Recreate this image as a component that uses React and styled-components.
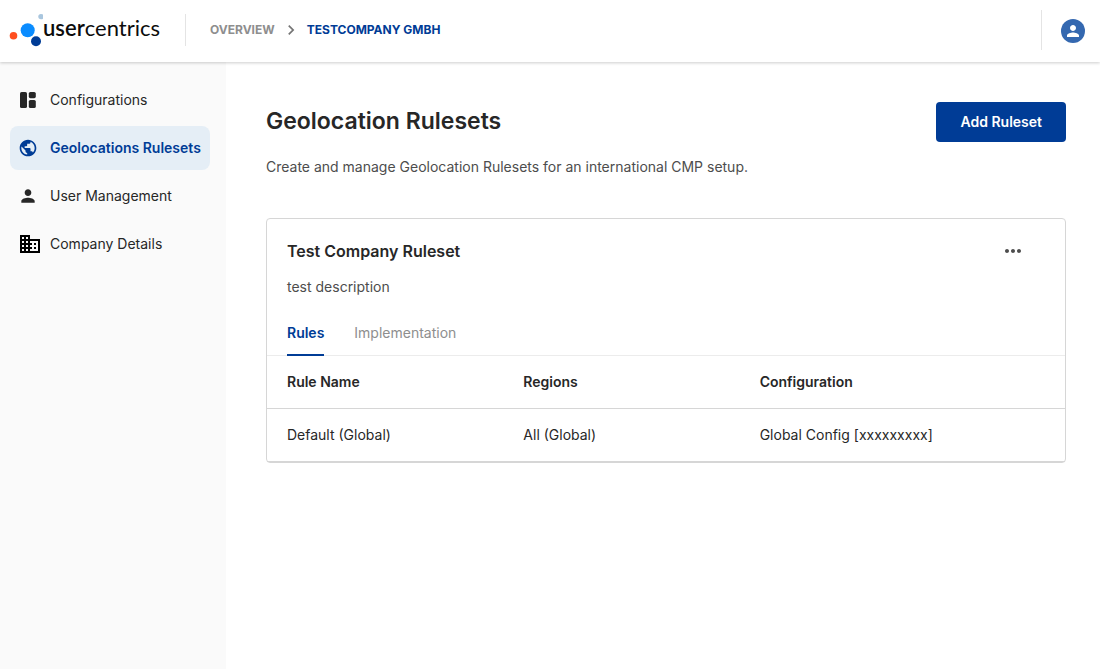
import React from "react";
import styled, { createGlobalStyle } from "styled-components";
import { MdBusiness, MdChevronRight, MdMoreHoriz, MdPerson, MdPublic } from "react-icons/md";

const color = {
  blue: "#003c96",
  avatar: "#3468b0",
  ink: "#272727",
  text: "#4d4d4d",
  muted: "#8e8e8e",
  line: "#d6d6d6",
  lineLight: "#ececec",
};

const GlobalStyle = createGlobalStyle`
  *, *::before, *::after { box-sizing: border-box; }
  body {
    margin: 0;
    background: #fff;
    color: ${color.ink};
    font: 400 14px/20px Inter, "Liberation Sans", sans-serif;
  }
  h1, h2, p, ul, ol { margin: 0; padding: 0; }
  ul, ol { list-style: none; }
  a { color: inherit; text-decoration: none; }
  button { border: 0; background: none; padding: 0; font: inherit; color: inherit; cursor: pointer; }
`;

const Page = styled.div`
  min-height: 100vh;
  display: flex;
  flex-direction: column;
`;

const TopBar = styled.header`
  position: relative;
  display: flex;
  align-items: center;
  height: 62px;
  padding: 0 15px 2px 8px;
  background: #fff;
  box-shadow: 0 1px 3px rgba(0, 0, 0, 0.2);
`;

const Brand = styled.a`
  display: flex;
  align-items: center;
  width: 178px;
  height: 32px;
  border-right: 1px solid #e4e4e4;
`;

const BrandMark = styled.svg`
  flex: none;
  width: 35px;
  height: 36px;
`;

const BrandName = styled.span`
  color: #0c0c0c;
  font: 400 22px/28px Lato, sans-serif;
  padding-bottom: 4px;
`;

const BrandStrong = styled.span`
  font-weight: 600;
`;

const Crumbs = styled.ol`
  display: flex;
  align-items: center;
  flex: 1;
  padding-left: 24px;
  font-size: 12px;
  font-weight: 700;
  line-height: 16px;
`;

const Crumb = styled.li`
  display: flex;
  align-items: center;
  color: ${(p) => (p.$current ? color.blue : color.muted)};

  svg { margin: 0 6px; color: #757575; }
`;

const Account = styled.div`
  display: flex;
  align-items: center;
  height: 40px;
  padding: 2px 0 0 19px;
  border-left: 1px solid #e4e4e4;
`;

const Avatar = styled.button`
  display: grid;
  place-items: center;
  width: 24px;
  height: 24px;
  border-radius: 50%;
  background: ${color.avatar};
  color: #fff;
`;

const Body = styled.div`
  display: flex;
  flex: 1;
`;

const Sidebar = styled.nav`
  flex: none;
  width: 226px;
  padding: 16px 16px 16px 10px;
  background: #fafafa;
`;

const NavList = styled.ul`
  display: grid;
  gap: 4px;
`;

const NavLink = styled.a`
  display: flex;
  align-items: center;
  gap: 8px;
  height: 44px;
  padding-left: 8px;
  border-radius: 8px;
  white-space: nowrap;
  background: ${(p) => (p.$active ? "#e5eef6" : "transparent")};
  color: ${(p) => (p.$active ? color.blue : color.ink)};
  font-weight: ${(p) => (p.$active ? 600 : 400)};
`;

const NavIcon = styled.span`
  display: flex;
  width: 24px;
`;

const Main = styled.main`
  flex: 1;
  min-width: 0;
  padding: 40px 34px 40px 40px;
`;

const PageHead = styled.div`
  display: flex;
  align-items: center;
  justify-content: space-between;
`;

const PageTitle = styled.h1`
  font-size: 23px;
  line-height: 36px;
  font-weight: 600;
  padding-bottom: 2px;
`;

const PrimaryButton = styled.button`
  height: 40px;
  padding: 0 24px;
  border-radius: 4px;
  background: ${color.blue};
  color: #fff;
  font-weight: 600;
`;

const Intro = styled.p`
  margin-top: 15px;
  color: ${color.text};
`;

const Card = styled.section`
  margin-top: 41px;
  border: 1px solid ${color.line};
  border-radius: 4px;
`;

const CardHead = styled.div`
  display: flex;
  align-items: center;
  justify-content: space-between;
  padding: 20px 40px 0 20px;
`;

const CardTitle = styled.h2`
  font-size: 16px;
  line-height: 24px;
  font-weight: 600;
`;

const MoreButton = styled.button`
  display: flex;
  color: #4d4d4d;
`;

const CardText = styled.p`
  padding: 14px 20px 0;
  color: ${color.text};
`;

const Tabs = styled.div`
  display: flex;
  gap: 30px;
  margin-top: 20px;
  padding: 0 20px;
  border-bottom: 1px solid ${color.lineLight};
`;

const Tab = styled.button`
  height: 39px;
  margin-bottom: -1px;
  padding-bottom: 5px;
  border-bottom: 2px solid ${(p) => (p.$active ? color.blue : "transparent")};
  color: ${(p) => (p.$active ? color.blue : color.muted)};
  font-weight: ${(p) => (p.$active ? 600 : 400)};
`;

const Table = styled.table`
  width: 100%;
  table-layout: fixed;
  border-spacing: 0;
  text-align: left;
`;

const EndCol = styled.col`
  width: 89px;
`;

const Cell = styled.td`
  height: 53px;
  padding: 0 0 0 20px;
  border-bottom: 1px solid ${color.line};
  font-weight: 400;
`;

const HeadCell = styled(Cell)`
  font-weight: 600;
`;

const DashboardIcon = () => (
  <svg width="20" height="20" viewBox="0 0 20 20" fill="currentColor" aria-hidden="true">
    <rect x="2" y="2" width="7" height="16" rx="1.6" />
    <rect x="10.8" y="2" width="7" height="6.2" rx="1.6" />
    <rect x="10.8" y="10" width="7" height="8" rx="1.6" />
  </svg>
);

const navItems = [
  { label: "Configurations", icon: <DashboardIcon /> },
  { label: "Geolocations Rulesets", icon: <MdPublic size={20} />, active: true },
  { label: "User Management", icon: <MdPerson size={20} /> },
  { label: "Company Details", icon: <MdBusiness size={24} color="#000" /> },
];

const columns = ["Rule Name", "Regions", "Configuration"];
const rows = [["Default (Global)", "All (Global)", "Global Config [xxxxxxxxx]"]];

export default function App() {
  return (
    <Page>
      <GlobalStyle />
      <TopBar>
        <Brand href="#" aria-label="usercentrics">
          <BrandMark viewBox="0 0 35 36" aria-hidden="true">
            <circle cx="33" cy="4.6" r="2.7" fill="#a9c6de" />
            <circle cx="5.5" cy="23.8" r="3.8" fill="#ff4f1f" />
            <circle cx="19.7" cy="18.2" r="7" fill="#0a8cff" />
            <circle cx="28" cy="29.2" r="5" fill="#003c96" />
          </BrandMark>
          <BrandName>
            <BrandStrong>user</BrandStrong>centrics
          </BrandName>
        </Brand>
        <Crumbs aria-label="Breadcrumb">
          <Crumb>
            <a href="#">OVERVIEW</a>
            <MdChevronRight size={20} aria-hidden="true" />
          </Crumb>
          <Crumb $current>
            <a href="#" aria-current="page">TESTCOMPANY GMBH</a>
          </Crumb>
        </Crumbs>
        <Account>
          <Avatar type="button" aria-label="Account">
            <MdPerson size={18} />
          </Avatar>
        </Account>
      </TopBar>
      <Body>
        <Sidebar aria-label="Main">
          <NavList>
            {navItems.map(({ label, icon, active }) => (
              <li key={label}>
                <NavLink href="#" $active={active} aria-current={active ? "page" : undefined}>
                  <NavIcon>{icon}</NavIcon>
                  {label}
                </NavLink>
              </li>
            ))}
          </NavList>
        </Sidebar>
        <Main>
          <PageHead>
            <PageTitle>Geolocation Rulesets</PageTitle>
            <PrimaryButton type="button">Add Ruleset</PrimaryButton>
          </PageHead>
          <Intro>Create and manage Geolocation Rulesets for an international CMP setup.</Intro>
          <Card>
            <CardHead>
              <CardTitle>Test Company Ruleset</CardTitle>
              <MoreButton type="button" aria-label="More actions">
                <MdMoreHoriz size={24} />
              </MoreButton>
            </CardHead>
            <CardText>test description</CardText>
            <Tabs role="tablist">
              <Tab type="button" role="tab" aria-selected="true" $active>Rules</Tab>
              <Tab type="button" role="tab" aria-selected="false">Implementation</Tab>
            </Tabs>
            <Table>
              <colgroup>
                <col />
                <col />
                <col />
                <EndCol />
              </colgroup>
              <thead>
                <tr>
                  {columns.map((name, i) => (
                    <HeadCell as="th" scope="col" key={name} colSpan={i === columns.length - 1 ? 2 : 1}>
                      {name}
                    </HeadCell>
                  ))}
                </tr>
              </thead>
              <tbody>
                {rows.map((row) => (
                  <tr key={row[0]}>
                    {row.map((value, i) => (
                      <Cell key={value} colSpan={i === row.length - 1 ? 2 : 1}>{value}</Cell>
                    ))}
                  </tr>
                ))}
              </tbody>
            </Table>
          </Card>
        </Main>
      </Body>
    </Page>
  );
}
